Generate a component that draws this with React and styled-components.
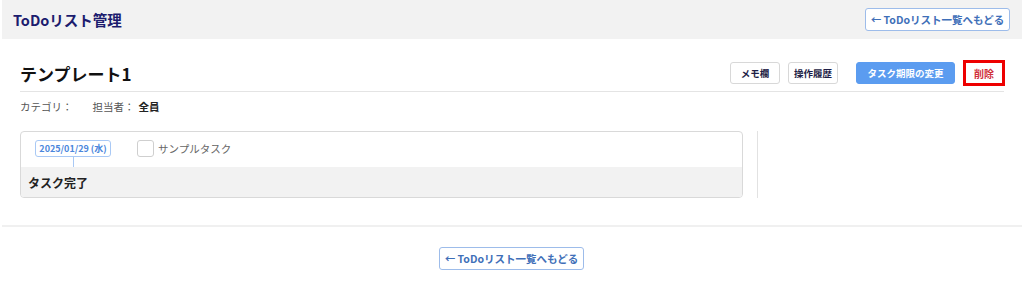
import styled, { createGlobalStyle } from "styled-components";

const GlobalStyle = createGlobalStyle`
  body {
    margin: 0;
    background: #fff;
    font-family: "Noto Sans CJK JP", "Noto Sans", sans-serif;
  }
`;

const App = () => {
  return (
    <Page>
      <GlobalStyle />
      <Header>
        <AppTitle>ToDoリスト管理</AppTitle>
        <BackButton>← ToDoリスト一覧へもどる</BackButton>
      </Header>

      <Main>
        <TitleRow>
          <ListTitle>テンプレート1</ListTitle>
          <Actions>
            <ActionButton>メモ欄</ActionButton>
            <ActionButton $spaced>操作履歴</ActionButton>
            <ActionButton $primary>タスク期限の変更</ActionButton>
            <DeleteButton>削除</DeleteButton>
          </Actions>
        </TitleRow>

        <Meta>
          <MetaItem>カテゴリ：</MetaItem>
          <MetaItem>
            担当者：<strong>全員</strong>
          </MetaItem>
        </Meta>

        <Board>
          <TaskCard>
            <TaskRow>
              <DateCell>
                <DateBadge>2025/01/29 (水)</DateBadge>
                <Connector />
              </DateCell>
              <Check />
              <TaskLabel>サンプルタスク</TaskLabel>
            </TaskRow>
            <DoneRow>タスク完了</DoneRow>
          </TaskCard>
          <Separator />
        </Board>
      </Main>

      <Footer>
        <BackButton>← ToDoリスト一覧へもどる</BackButton>
      </Footer>
    </Page>
  );
};

export default App;

//Styled Components
const Page = styled.div`
  padding: 0 2px;
`;

const Header = styled.header`
  height: 39px;
  background: #f2f2f2;
  display: flex;
  align-items: center;
  justify-content: space-between;
  padding: 0 12px 0 11px;
`;

const AppTitle = styled.h1`
  margin: 0;
  font-size: 14.5px;
  font-weight: 700;
  color: #1c1c6e;
`;

const BackButton = styled.button`
  font-family: inherit;
  height: 23px;
  width: 145px;
  padding: 0;
  background: #fff;
  border: 1px solid #9dbcea;
  border-radius: 3px;
  color: #3f6fb8;
  font-size: 10.5px;
  font-weight: 700;
`;

const Main = styled.main`
  padding: 0 18px;
`;

const TitleRow = styled.div`
  display: flex;
  align-items: center;
  justify-content: space-between;
  padding: 21px 0 5px;
  border-bottom: 1px solid #e4e4e4;
`;

const ListTitle = styled.h2`
  margin: 0;
  font-size: 17px;
  font-weight: 700;
  color: #111;
`;

const Actions = styled.div`
  display: flex;
  align-items: center;
  gap: 8px;
`;

const ActionButton = styled.button`
  font-family: inherit;
  height: 22px;
  width: ${(p) => (p.$primary ? "99px" : "50px")};
  margin-right: ${(p) => (p.$spaced ? "10px" : "0")};
  padding: 0;
  border-radius: 3px;
  font-size: 9.5px;
  font-weight: 700;
  white-space: nowrap;
  border: 1px solid ${(p) => (p.$primary ? "#5b9cf0" : "#d8d8d8")};
  background: ${(p) => (p.$primary ? "#5b9cf0" : "#fff")};
  color: ${(p) => (p.$primary ? "#fff" : "#1e1e46")};
`;

const DeleteButton = styled.button`
  font-family: inherit;
  height: 26px;
  width: 42px;
  margin-right: -1px;
  padding: 0;
  background: #fff;
  border: 3px solid #ee0000;
  color: #d0303a;
  font-size: 10px;
  font-weight: 700;
`;

const Meta = styled.div`
  display: flex;
  gap: 20px;
  padding: 7px 0 0;
  height: 17px;
  font-size: 10.5px;
  color: #555;

  strong {
    color: #222;
    margin-left: 4px;
  }
`;

const MetaItem = styled.span``;

const Board = styled.div`
  display: flex;
  align-items: stretch;
  margin-top: 15px;
  height: 67px;
`;

const TaskCard = styled.div`
  width: 723px;
  box-sizing: border-box;
  border: 1px solid #d9d9d9;
  border-radius: 4px;
  overflow: hidden;
  display: flex;
  flex-direction: column;
`;

const TaskRow = styled.div`
  height: 35px;
  display: flex;
  align-items: flex-start;
  padding: 8px 0 0 14px;
  box-sizing: border-box;
`;

const DateCell = styled.div`
  display: flex;
  flex-direction: column;
  align-items: center;
  width: 76px;
  margin-right: 26px;
`;

const DateBadge = styled.span`
  height: 17px;
  width: 76px;
  box-sizing: border-box;
  border: 1px solid #a9c9f5;
  border-radius: 3px;
  color: #4a86dc;
  font-size: 9px;
  font-weight: 700;
  white-space: nowrap;
  display: flex;
  align-items: center;
  justify-content: center;
`;

const Connector = styled.span`
  width: 1px;
  height: 10px;
  background: #a9c9f5;
`;

const Check = styled.span`
  width: 17px;
  height: 17px;
  box-sizing: border-box;
  border: 1px solid #cfcfcf;
  border-radius: 3px;
  margin-right: 4px;
`;

const TaskLabel = styled.span`
  font-size: 10.5px;
  line-height: 17px;
  color: #666;
`;

const DoneRow = styled.div`
  flex: 1;
  background: #f2f2f2;
  display: flex;
  align-items: center;
  padding-left: 7px;
  font-size: 12px;
  font-weight: 700;
  color: #222;
`;

const Separator = styled.div`
  width: 1px;
  background: #e2e2e2;
  margin-left: 14px;
`;

const Footer = styled.footer`
  margin-top: 27px;
  border-top: 2px solid #f0f0f0;
  display: flex;
  justify-content: center;
  padding-top: 20px;
  padding-right: 1px;
`;
